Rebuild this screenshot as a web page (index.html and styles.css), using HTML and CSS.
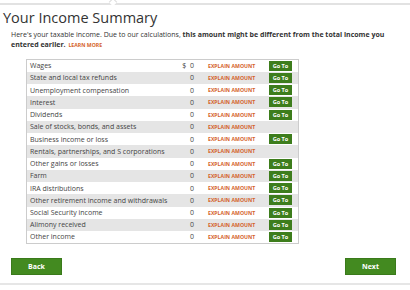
FILE: index.html
```html
<!DOCTYPE html>
<html lang="en">
<head>
    <meta charset="UTF-8">
    <meta name="viewport" content="width=device-width, initial-scale=1.0">
    <title>Your Income Summary</title>
    <link rel="stylesheet" href="styles.css">
</head>
<body>

<div class="topbar"><span class="caret"></span></div>

<div class="page">
    <h1>Your Income Summary</h1>
    <p class="intro">
        Here's your taxable income. Due to our calculations, <b>this amount might be different from the total income you entered earlier.</b>
        <a href="#" class="learn">LEARN MORE</a>
    </p>

    <table class="income">
        <tr><td class="label">Wages</td><td class="amt">$&nbsp;&nbsp;0</td><td class="explain">EXPLAIN AMOUNT</td><td class="go"><button>Go To</button></td></tr>
        <tr><td class="label">State and local tax refunds</td><td class="amt">0</td><td class="explain">EXPLAIN AMOUNT</td><td class="go"><button>Go To</button></td></tr>
        <tr><td class="label">Unemployment compensation</td><td class="amt">0</td><td class="explain">EXPLAIN AMOUNT</td><td class="go"><button>Go To</button></td></tr>
        <tr><td class="label">Interest</td><td class="amt">0</td><td class="explain">EXPLAIN AMOUNT</td><td class="go"><button>Go To</button></td></tr>
        <tr><td class="label">Dividends</td><td class="amt">0</td><td class="explain">EXPLAIN AMOUNT</td><td class="go"><button>Go To</button></td></tr>
        <tr><td class="label">Sale of stocks, bonds, and assets</td><td class="amt">0</td><td class="explain">EXPLAIN AMOUNT</td><td class="go"></td></tr>
        <tr><td class="label">Business income or loss</td><td class="amt">0</td><td class="explain">EXPLAIN AMOUNT</td><td class="go"><button>Go To</button></td></tr>
        <tr><td class="label">Rentals, partnerships, and S corporations</td><td class="amt">0</td><td class="explain">EXPLAIN AMOUNT</td><td class="go"></td></tr>
        <tr><td class="label">Other gains or losses</td><td class="amt">0</td><td class="explain">EXPLAIN AMOUNT</td><td class="go"><button>Go To</button></td></tr>
        <tr><td class="label">Farm</td><td class="amt">0</td><td class="explain">EXPLAIN AMOUNT</td><td class="go"><button>Go To</button></td></tr>
        <tr><td class="label">IRA distributions</td><td class="amt">0</td><td class="explain">EXPLAIN AMOUNT</td><td class="go"><button>Go To</button></td></tr>
        <tr><td class="label">Other retirement income and withdrawals</td><td class="amt">0</td><td class="explain">EXPLAIN AMOUNT</td><td class="go"><button>Go To</button></td></tr>
        <tr><td class="label">Social Security income</td><td class="amt">0</td><td class="explain">EXPLAIN AMOUNT</td><td class="go"><button>Go To</button></td></tr>
        <tr><td class="label">Alimony received</td><td class="amt">0</td><td class="explain">EXPLAIN AMOUNT</td><td class="go"><button>Go To</button></td></tr>
        <tr><td class="label">Other income</td><td class="amt">0</td><td class="explain">EXPLAIN AMOUNT</td><td class="go"><button>Go To</button></td></tr>
    </table>

    <div class="nav">
        <button class="navbtn">Back</button>
        <button class="navbtn">Next</button>
    </div>
</div>

<div class="bottombar"></div>

</body>
</html>
```

FILE: styles.css
```css
body {
    font-family: "Open Sans", Arial, sans-serif;
    background-color: #fff;
    color: #333;
    margin: 0;
    width: 410px;
    height: 290px;
    overflow: hidden;
}

.topbar {
    position: relative;
    margin-top: 3px;
    height: 0;
    border-top: 2px solid #e2e2e2;
}

.caret {
    position: absolute;
    left: 110px;
    top: -6px;
    width: 5px;
    height: 5px;
    background: #fff;
    border-top: 1px solid #dcdcdc;
    border-left: 1px solid #dcdcdc;
    transform: rotate(45deg);
}

.page {
    padding: 0 14px 0 11px;
}

h1 {
    font-size: 14.5px;
    font-weight: normal;
    line-height: 16px;
    margin: 5px 0 0 -8px;
    color: #333;
}

.intro {
    font-size: 7px;
    line-height: 10px;
    margin: 4px 0 0;
    color: #333;
}

.intro b {
    font-weight: bold;
}

.learn {
    font-size: 5.2px;
    font-weight: bold;
    color: #d4622a;
    text-decoration: none;
    margin-left: 1px;
}

.income {
    margin: 9px 0 0 15px;
    width: 273px;
    border: 1px solid #cccccc;
    border-collapse: collapse;
    font-size: 7px;
}

.income tr {
    height: 12.25px;
}

.income tr:nth-child(even) {
    background-color: #e5e5e5;
}

.income td {
    padding: 0;
    white-space: nowrap;
}

.income .label {
    padding-left: 3px;
    color: #444;
}

.income .amt {
    text-align: right;
    width: 30px;
    padding-right: 1px;
    color: #444;
}

.income .explain {
    width: 58px;
    padding-left: 13px;
    font-size: 5.2px;
    font-weight: bold;
    color: #d4622a;
}

.income .go {
    width: 29px;
    padding-right: 6px;
}

.income button {
    display: block;
    margin-left: auto;
    background-color: #3d7d1c;
    color: #fff;
    border: none;
    width: 23px;
    height: 10px;
    padding: 0;
    font-family: "Open Sans", Arial, sans-serif;
    font-size: 5.6px;
    font-weight: bold;
    line-height: 10px;
}

.nav {
    display: flex;
    justify-content: space-between;
    margin-top: 14px;
}

.navbtn {
    width: 51px;
    height: 17px;
    background-color: #438a20;
    border: 1px solid #3a7a1b;
    color: #fff;
    font-family: "Open Sans", Arial, sans-serif;
    font-size: 7px;
    font-weight: bold;
    padding: 0;
}

.bottombar {
    margin-top: 8px;
    border-top: 2px solid #e6e6e6;
}
```
